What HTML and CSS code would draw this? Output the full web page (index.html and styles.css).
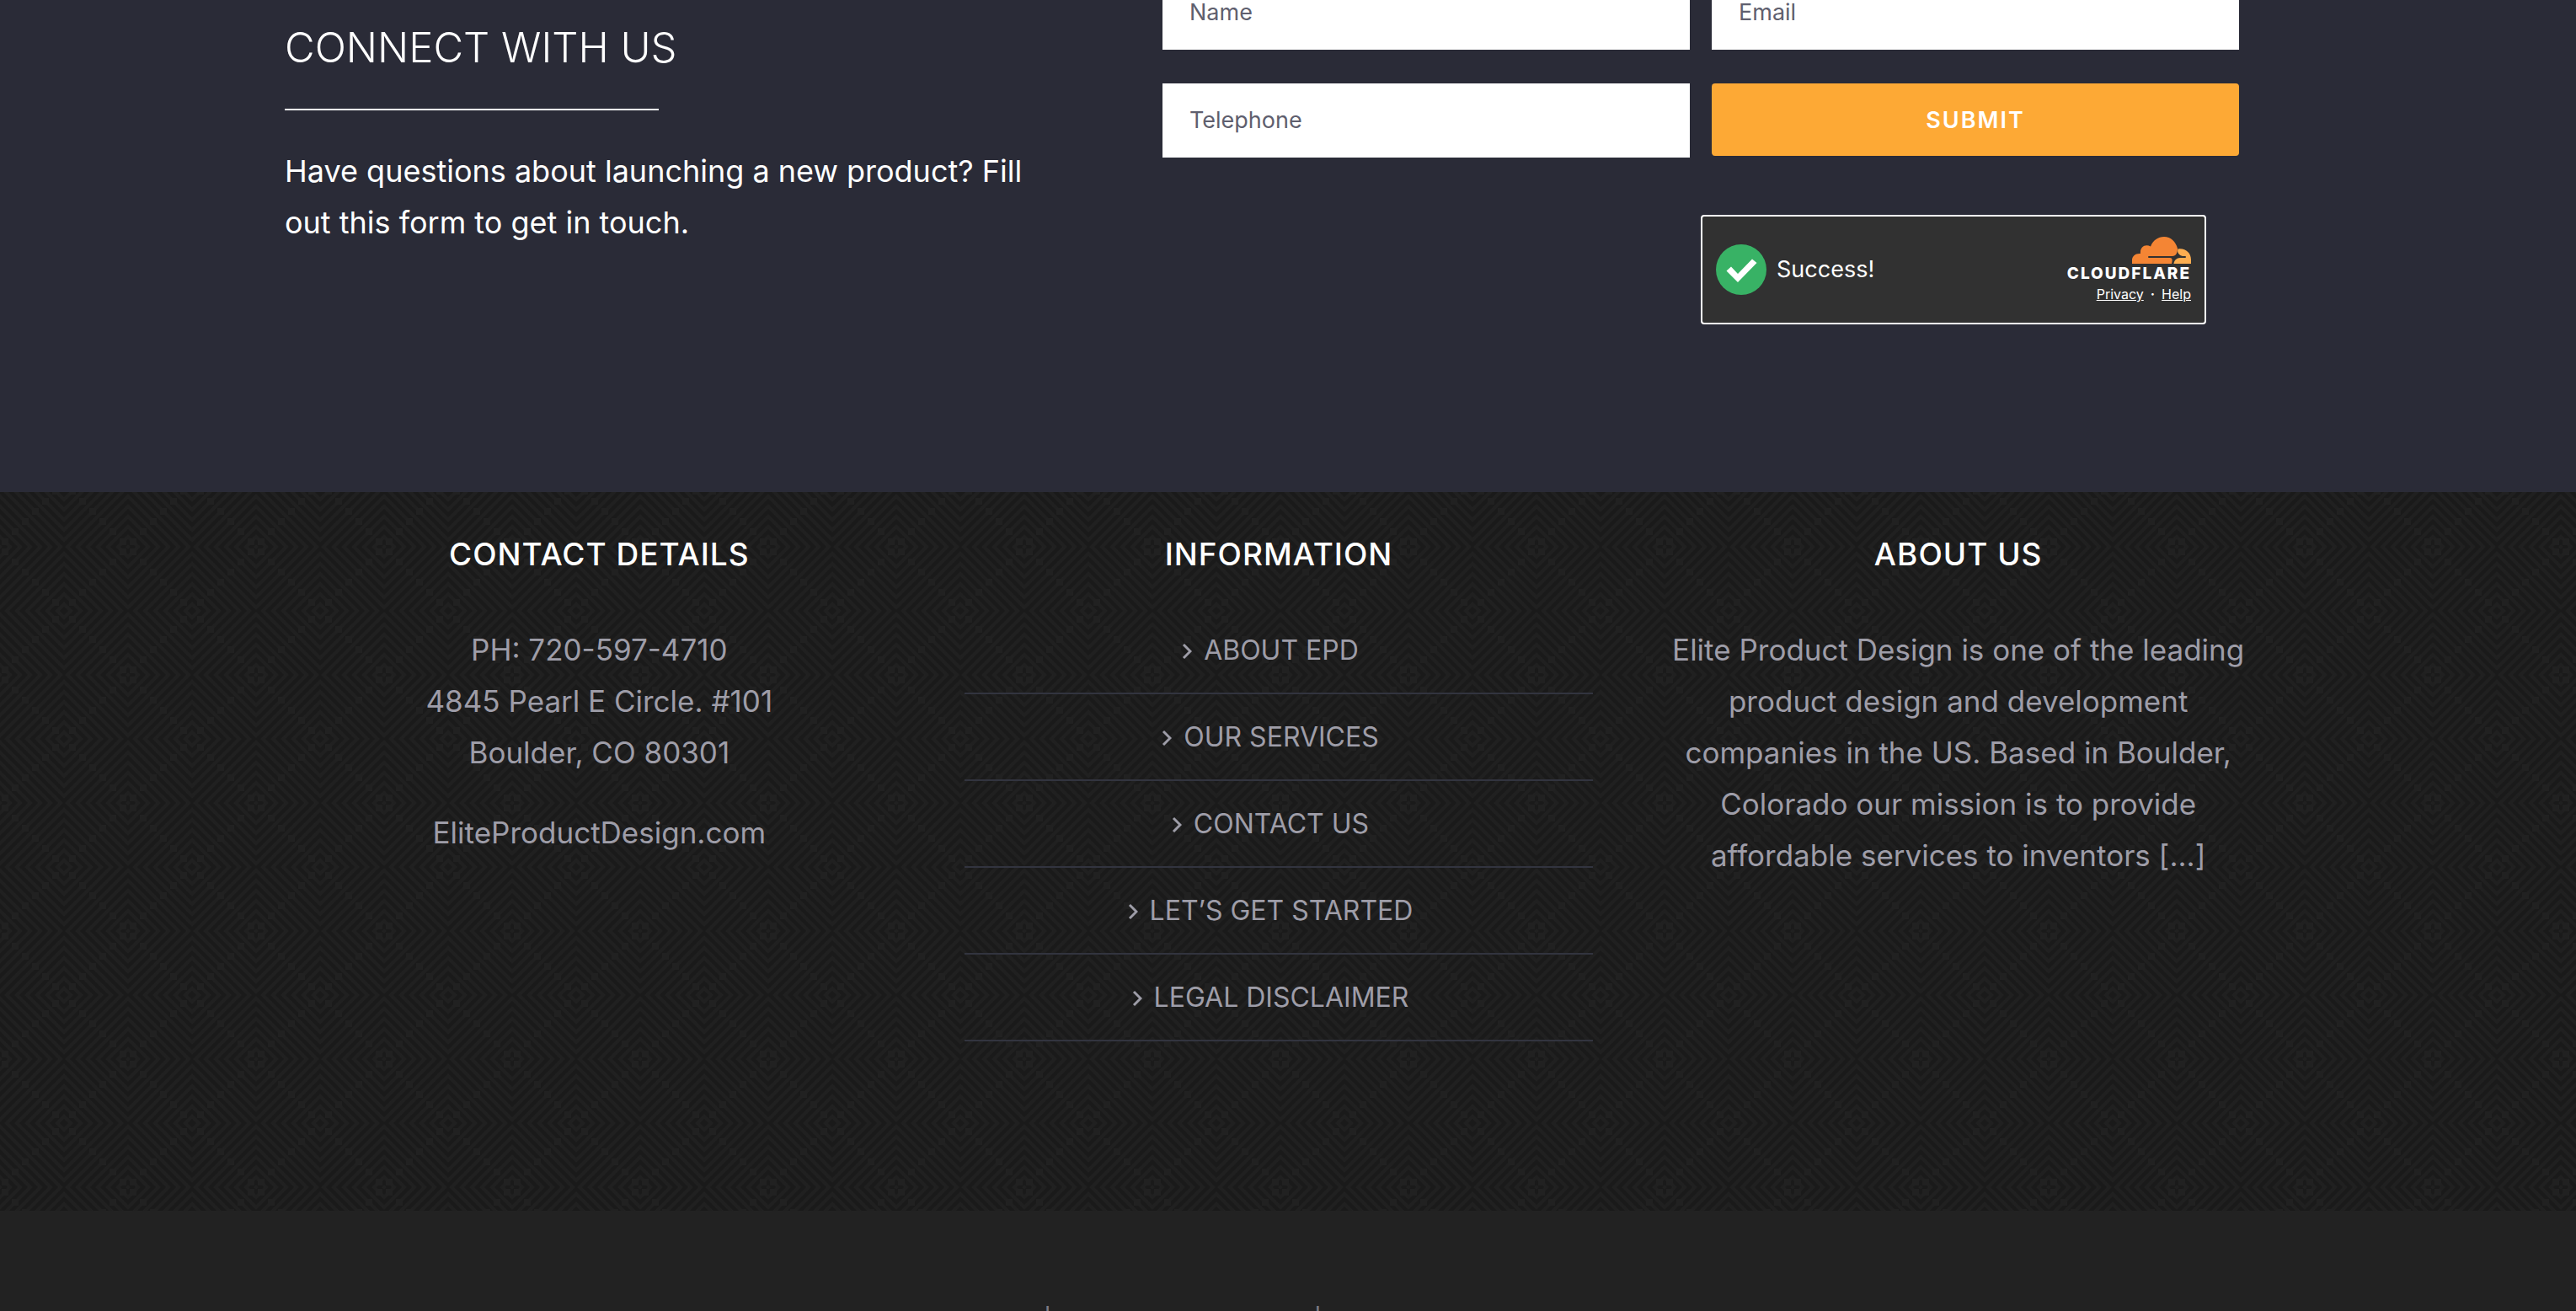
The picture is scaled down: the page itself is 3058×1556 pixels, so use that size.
FILE: index.html
```html
<!DOCTYPE html>
<html lang="en">
<head>
    <meta charset="UTF-8">
    <meta name="viewport" content="width=device-width, initial-scale=1.0">
    <title>Elite Product Design</title>
    <link rel="stylesheet" href="styles.css">
</head>
<body>
    <!-- Contact form -->
    <section class="connect">
        <div class="connect-inner">
            <div class="connect-text">
                <h2>CONNECT WITH US</h2>
                <hr class="divider">
                <p>Have questions about launching a new product? Fill out this form to get in touch.</p>
            </div>
            <form class="connect-form">
                <input type="text" name="name" placeholder="Name" aria-label="Name">
                <input type="email" name="email" placeholder="Email" aria-label="Email">
                <input type="tel" name="telephone" placeholder="Telephone" aria-label="Telephone">
                <button type="submit">SUBMIT</button>
                <div class="turnstile">
                    <svg class="check" viewBox="0 0 60 60" aria-hidden="true">
                        <circle cx="30" cy="30" r="30" fill="#38b265"/>
                        <path d="M12.500 31.500l5.500-5 8 8.500 17-17.500 5.500 4.500-22.500 23z" fill="#fff"/>
                    </svg>
                    <span class="status">Success!</span>
                    <div class="brand">
                        <svg class="cloud" viewBox="0 0 70 32" aria-hidden="true">
                            <path d="M0 32v-4c0-5 4-8.500 10-8C9 13 15 8 22 11.500 25 4 31 0 38 0c8 0 14 6 16 14 0 5-2 9-6 9H20a1 1 0 0 0 0 2h25c3 0 3 3 2 7z" fill="#f48534"/>
                            <path d="M54.500 14.500C63 13 70 19 70 27v5H49.500c.5-4 3.500-7 7.500-7h6a1 1 0 0 0 0-2h-3c-4-1-7-4-5.500-8.500z" fill="#fbad50"/>
                        </svg>
                        <span class="wordmark">CLOUDFLARE</span>
                        <span class="links"><a href="#">Privacy</a><b>·</b><a href="#">Help</a></span>
                    </div>
                </div>
            </form>
        </div>
    </section>

    <!-- Footer widgets -->
    <footer class="footer">
        <div class="footer-inner">
            <section class="widget">
                <h4>CONTACT DETAILS</h4>
                <p>PH: 720-597-4710<br>4845 Pearl E Circle. #101<br>Boulder, CO 80301</p>
                <p>EliteProductDesign.com</p>
            </section>
            <section class="widget">
                <h4>INFORMATION</h4>
                <ul class="menu">
                    <li><a href="#"><svg class="arrow" viewBox="0 0 12 20" aria-hidden="true"><path d="M2 2l8 8-8 8"/></svg>ABOUT EPD</a></li>
                    <li><a href="#"><svg class="arrow" viewBox="0 0 12 20" aria-hidden="true"><path d="M2 2l8 8-8 8"/></svg>OUR SERVICES</a></li>
                    <li><a href="#"><svg class="arrow" viewBox="0 0 12 20" aria-hidden="true"><path d="M2 2l8 8-8 8"/></svg>CONTACT US</a></li>
                    <li><a href="#"><svg class="arrow" viewBox="0 0 12 20" aria-hidden="true"><path d="M2 2l8 8-8 8"/></svg>LET’S GET STARTED</a></li>
                    <li><a href="#"><svg class="arrow" viewBox="0 0 12 20" aria-hidden="true"><path d="M2 2l8 8-8 8"/></svg>LEGAL DISCLAIMER</a></li>
                </ul>
            </section>
            <section class="widget">
                <h4>ABOUT US</h4>
                <p>Elite Product Design is one of the leading product design and development companies in the US. Based in Boulder, Colorado our mission is to provide affordable services to inventors [...]</p>
            </section>
        </div>
    </footer>

    <!-- Copyright bar -->
    <div class="copyright">
        <p>Copyright 2008 - 2023 | All Rights Reserved | Website Traffic Driven by <a href="#">Webolutions</a></p>
    </div>
</body>
</html>
```
FILE: styles.css
```css
* {
    box-sizing: border-box;
}

body {
    margin: 0;
    height: 100vh;
    overflow: hidden;
    background-color: #222;
    color: #9e9da8;
    font-family: Inter, "Open Sans", sans-serif;
    font-size: 35px;
    line-height: 61px;
}

h2, h4, p, ul {
    margin: 0;
    padding: 0;
    font-weight: 400;
}

a {
    color: inherit;
    text-decoration: none;
}

/* Contact form */
.connect {
    padding-right: 22px;
    background-color: #2a2b37;
    color: #fff;
}

.connect-inner {
    display: grid;
    grid-template-columns: 922fr 1278fr;
    gap: 120px;
    max-width: 2360px;
    min-height: 584px;
    margin: 0 auto;
    padding-right: 40px;
}

.connect-text {
    padding-top: 27px;
    font-size: 36px;
}

.connect-text h2 {
    font-size: 49px;
    font-weight: 300;
    line-height: 60px;
}

.divider {
    width: 444px;
    height: 2px;
    margin: 42px 0;
    border: 0;
    background-color: #fff;
}

.connect-form {
    display: grid;
    grid-template-columns: 1fr 1fr;
    align-content: start;
    gap: 40px 26px;
    margin-top: -29px;
}

.connect-form input {
    width: 100%;
    height: 88px;
    padding: 0 32px 2px;
    border: 0;
    border-radius: 0;
    background-color: #fff;
    color: #5f5f6e;
    font: 400 27px Inter, sans-serif;
}

.connect-form input::placeholder {
    color: #5f5f6e;
    opacity: 1;
}

.connect-form button {
    height: 86px;
    border: 0;
    border-radius: 4px;
    background-color: #fda935;
    color: #fff;
    font: 600 27px Inter, sans-serif;
    letter-spacing: 2px;
    cursor: pointer;
}

/* Captcha box */
.turnstile {
    grid-column: 1 / -1;
    justify-self: end;
    display: flex;
    align-items: center;
    width: 600px;
    height: 130px;
    margin: 28px 39px 0 0;
    padding: 0 16px;
    border: 2px solid #fff;
    border-radius: 4px;
    background-color: #313131;
    line-height: 20px;
}

.check {
    width: 60px;
    height: 60px;
    margin-right: 12px;
}

.status {
    font-size: 27px;
}

.brand {
    display: flex;
    flex-direction: column;
    align-items: flex-end;
    margin-left: auto;
}

.cloud {
    width: 70px;
    height: 32px;
}

.wordmark {
    margin: 2px 0 4px;
    font-size: 19px;
    font-weight: 800;
    letter-spacing: 2px;
}

.links {
    display: flex;
    gap: 8px;
    font-size: 16px;
}

.links a {
    text-decoration: underline;
}

/* Footer, woven diamond texture behind the widgets */
.footer {
    padding: 52px 22px 201px 0;
    background-color: #1a1a1a;
    background-image: url("data:image/svg+xml,%3Csvg xmlns='http://www.w3.org/2000/svg' width='152' height='152'%3E%3Cdefs%3E%3Cpattern id='a' width='12' height='12' patternUnits='userSpaceOnUse'%3E%3Cpath d='M-2 10L10-2M6 14l8-8' stroke='%23202020' stroke-width='4'/%3E%3C/pattern%3E%3Cpattern id='b' width='12' height='12' patternUnits='userSpaceOnUse'%3E%3Cpath d='M-2-2l16 16M-3 9l6 6M9-3l6 6' stroke='%23202020' stroke-width='4'/%3E%3C/pattern%3E%3C/defs%3E%3Cpath d='M0 0h76v76H0zM76 76h76v76H76z' fill='url(%23a)'/%3E%3Cpath d='M76 0h76v76H76zM0 76h76v76H0z' fill='url(%23b)'/%3E%3Cg fill='none' stroke='%23212121' stroke-width='8' stroke-dasharray='8 4'%3E%3Cpath d='M66 70h20M66 82h20'/%3E%3Cpath d='M54 58h8M90 58h8M54 94h8M90 94h8M42 46h8M102 46h8M42 106h8M102 106h8M30 34h8M114 34h8M30 118h8M114 118h8M18 22h8M126 22h8M18 130h8M126 130h8M6 10h8M138 10h8M6 142h8M138 142h8'/%3E%3C/g%3E%3C/svg%3E");
    background-position: -76px -11px;
}

.footer-inner {
    display: grid;
    grid-template-columns: repeat(3, 1fr);
    gap: 60px;
    max-width: 2360px;
    margin: 0 auto;
    text-align: center;
}

.widget h4 {
    margin-bottom: 61px;
    color: #fff;
    font-size: 37px;
    font-weight: 500;
    line-height: 44px;
    letter-spacing: 1px;
}

.widget p {
    margin-bottom: 34px;
    padding: 0 20px;
}

.menu {
    list-style: none;
    font-size: 32px;
}

.menu li {
    padding: 20px 20px 20px 0;
    border-bottom: 2px solid #32343f;
}

.menu li:first-child {
    padding-top: 0;
}

.arrow {
    width: 12px;
    height: 20px;
    margin-right: 14px;
    fill: none;
    stroke: #9e9da8;
    stroke-width: 3;
}

/* Copyright bar */
.copyright {
    padding: 102px 22px 100px 0;
    background-color: #222;
    color: #7d7c86;
    font-size: 32px;
    text-align: center;
}

.copyright a {
    color: #fda935;
}
```
